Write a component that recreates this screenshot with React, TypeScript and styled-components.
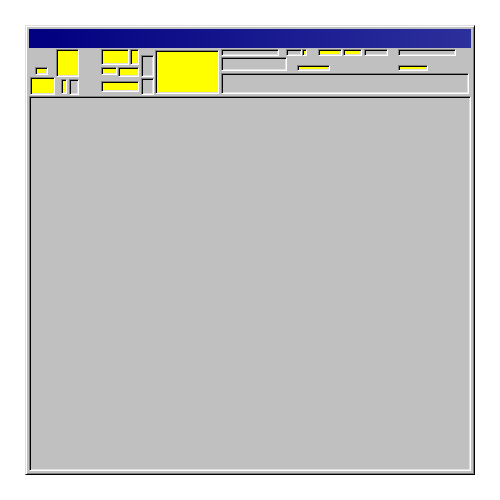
import styled, { createGlobalStyle } from "styled-components";

const GlobalStyle = createGlobalStyle`
    html, body {
        margin: 0;
        padding: 0;
        background: #ffffff;
        font-family: "Liberation Sans", Arial, sans-serif;
    }
    * {
        box-sizing: border-box;
    }
`;

const Window = styled.div`
    margin: 25px;
    width: 450px;
    height: 450px;
    background: #c0c0c0;
    border: 1px solid;
    border-color: #dfdfdf #000000 #000000 #dfdfdf;
    box-shadow: inset 1px 1px 0 #ffffff, inset -1px -1px 0 #808080;
    padding: 3px;
    display: flex;
    flex-direction: column;
`;

const TitleBar = styled.div`
    height: 19px;
    flex-shrink: 0;
    background: linear-gradient(to right, #000080, #2c309c);
`;

const Toolbar = styled.div`
    height: 48px;
    flex-shrink: 0;
    display: flex;
    align-items: flex-start;
    padding: 1px;
`;

const Column = styled.div<{ $w?: number; $gap?: number; $pt?: number; $ml?: number; $end?: boolean }>`
    display: flex;
    flex-direction: column;
    width: ${(p) => (p.$w ? `${p.$w}px` : "auto")};
    gap: ${(p) => p.$gap ?? 0}px;
    padding-top: ${(p) => p.$pt ?? 0}px;
    margin-left: ${(p) => p.$ml ?? 0}px;
    justify-content: ${(p) => (p.$end ? "flex-end" : "flex-start")};
    height: ${(p) => (p.$end ? "46px" : "auto")};
`;

const Row = styled.div<{ $gap?: number; $pl?: number; $mt?: number; $bottom?: boolean }>`
    display: flex;
    gap: ${(p) => p.$gap ?? 0}px;
    padding-left: ${(p) => p.$pl ?? 0}px;
    margin-top: ${(p) => p.$mt ?? 0}px;
    align-items: ${(p) => (p.$bottom ? "flex-end" : "flex-start")};
`;

const Cluster = styled.div<{ $ml: number }>`
    display: flex;
    gap: 1px;
    margin-left: ${(p) => p.$ml}px;
`;

const Strip = styled.div<{ $ml: number }>`
    flex: 1;
    display: flex;
    flex-direction: column;
    margin-left: ${(p) => p.$ml}px;
    margin-right: 1px;
`;

// sunken field, yellow when switched on
const Field = styled.div<{ $w?: number; $h: number; $on?: boolean; $ml?: number; $mt?: number }>`
    flex-shrink: 0;
    width: ${(p) => (p.$w ? `${p.$w}px` : "100%")};
    height: ${(p) => p.$h}px;
    margin-left: ${(p) => p.$ml ?? 0}px;
    margin-top: ${(p) => p.$mt ?? 0}px;
    background: ${(p) => (p.$on ? "#ffff00" : "#c0c0c0")};
    border: 1px solid;
    border-color: #808080 #ffffff #ffffff #808080;
    box-shadow: inset 1px 1px 0 #000000, inset -1px -1px 0 #dfdfdf;
`;

const MainPanel = styled.div`
    flex: 1;
    background: #c0c0c0;
    border: 1px solid;
    border-color: #808080 #ffffff #ffffff #808080;
    box-shadow: inset 1px 1px 0 #000000, inset -1px -1px 0 #dfdfdf;
`;

export default function App() {
    return (
        <>
            <GlobalStyle />
            <Window>
                <TitleBar />
                <Toolbar>
                    <Cluster $ml={0}>
                        <Column $w={25} $gap={2} $end>
                            <Field $w={13} $h={8} $ml={5} $on />
                            <Field $w={25} $h={18} $on />
                        </Column>
                        <Column $w={23} $gap={2}>
                            <Field $w={23} $h={28} $on />
                            <Row $gap={2} $pl={5}>
                                <Field $w={6} $h={15} $on />
                                <Field $w={10} $h={16} />
                            </Row>
                        </Column>
                    </Cluster>

                    <Column $w={38} $ml={22}>
                        <Row $gap={1}>
                            <Field $w={28} $h={16} $on />
                            <Field $w={9} $h={16} $on />
                        </Row>
                        <Row $gap={1} $mt={2}>
                            <Field $w={16} $h={8} $on />
                            <Field $w={21} $h={10} $on />
                        </Row>
                        <Field $w={38} $h={11} $mt={4} $on />
                    </Column>

                    <Column $w={13} $ml={2} $pt={6} $gap={1}>
                        <Field $w={13} $h={22} />
                        <Field $w={13} $h={17} />
                    </Column>

                    <Field $w={64} $h={44} $ml={1} $mt={1} $on />

                    <Strip $ml={2}>
                        <Row>
                            <Field $w={58} $h={7} />
                            <Field $w={16} $h={7} $ml={7} />
                            <Field $w={5} $h={7} $on />
                            <Field $w={24} $h={7} $ml={11} $on />
                            <Field $w={19} $h={7} $ml={1} $on />
                            <Field $w={24} $h={7} $ml={2} />
                            <Field $w={58} $h={7} $ml={10} />
                        </Row>
                        <Row $mt={1} $bottom>
                            <Field $w={66} $h={14} />
                            <Field $w={33} $h={6} $ml={10} $on />
                            <Field $w={30} $h={6} $ml={68} $on />
                        </Row>
                        <Field $h={21} $mt={2} />
                    </Strip>
                </Toolbar>
                <MainPanel />
            </Window>
        </>
    );
}
